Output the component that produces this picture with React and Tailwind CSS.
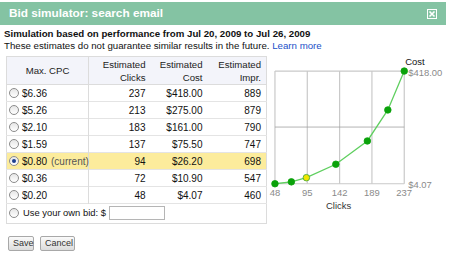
const rows = [
  { cpc: '$6.36', clicks: 237, cost: '$418.00', impr: 889 },
  { cpc: '$5.26', clicks: 213, cost: '$275.00', impr: 879 },
  { cpc: '$2.10', clicks: 183, cost: '$161.00', impr: 790 },
  { cpc: '$1.59', clicks: 137, cost: '$75.50', impr: 747 },
  { cpc: '$0.80', clicks: 94, cost: '$26.20', impr: 698, current: true },
  { cpc: '$0.36', clicks: 72, cost: '$10.90', impr: 547 },
  { cpc: '$0.20', clicks: 48, cost: '$4.07', impr: 460 },
];

// chart points in page coordinates (chart svg starts at x=266, y=56)
const points = [
  [274, 184],
  [290.5, 182.1],
  [305.6, 177.9, true],
  [335.2, 164.4],
  [366.9, 141],
  [387.5, 109.8],
  [404, 70.7],
];

function Radio({ checked }) {
  return (
    <span className="inline-flex items-center justify-center w-[10px] h-[10px] rounded-full border border-[#8c8c8c] bg-gradient-to-b from-[#e6e6e6] to-white mr-[2px] shrink-0">
      {checked && <span className="w-[4px] h-[4px] rounded-full bg-[#1c3f8f]" />}
    </span>
  );
}

function Chart() {
  const gx = [274, 306.5, 339, 371.5, 404];
  const labels = ['48', '95', '142', '189', '237'];
  const font = 'Liberation Sans, Arial, sans-serif';
  return (
    <svg width="184" height="160" viewBox="266 56 184 160" className="block">
      {gx.map((x) => (
        <line key={x} x1={x} y1={70.7} x2={x} y2={184} stroke="#c9c9c9" strokeWidth="1.2" />
      ))}
      <line x1={274} y1={70.7} x2={404} y2={70.7} stroke="#c9c9c9" strokeWidth="1.2" />
      <line x1={274} y1={127} x2={404} y2={127} stroke="#a0a0a0" strokeWidth="0.8" />
      <line x1={274} y1={184} x2={404} y2={184} stroke="#c9c9c9" strokeWidth="1.2" />
      <polyline
        points={points.map((p) => `${p[0]},${p[1]}`).join(' ')}
        fill="none"
        stroke="#5fcf5f"
        strokeWidth="1.3"
      />
      {points.map((p, i) => (
        <circle
          key={i}
          cx={p[0]}
          cy={p[1]}
          r="3.3"
          fill={p[2] ? '#f2e600' : '#0aa20a'}
          stroke={p[2] ? '#3aa53a' : '#0aa20a'}
          strokeWidth="0.8"
        />
      ))}
      <text x="405" y="64.5" fontSize="9.5" fill="#111" fontFamily={font}>Cost</text>
      <text x="408" y="75.5" fontSize="9.5" fill="#8a8a8a" fontFamily={font}>$418.00</text>
      <text x="408" y="188" fontSize="9.5" fill="#8a8a8a" fontFamily={font}>$4.07</text>
      {gx.map((x, i) => (
        <text key={x} x={x} y="196" fontSize="9.5" fill="#8a8a8a" textAnchor="middle" fontFamily={font}>
          {labels[i]}
        </text>
      ))}
      <text x="338" y="209" fontSize="9.5" fill="#333" textAnchor="middle" fontFamily={font}>Clicks</text>
    </svg>
  );
}

export default function App() {
  return (
    <div className="w-[450px] h-[257px] bg-white overflow-hidden text-[#111]" style={{ fontFamily: '"Liberation Sans", Arial, sans-serif' }}>
      <div className="mt-[2px] w-[446px] h-[23px] bg-[#84c3a3] flex items-center justify-between pl-[9px] pr-[9px]">
        <span className="text-white font-bold text-[11.8px] leading-none">Bid simulator: search email</span>
        <svg width="10" height="10" viewBox="0 0 10 10">
          <rect x="0.5" y="0.5" width="9" height="9" fill="none" stroke="#fff" strokeWidth="1" />
          <path d="M2.5 2.5 L7.5 7.5 M7.5 2.5 L2.5 7.5" stroke="#fff" strokeWidth="1.6" />
        </svg>
      </div>
      <div className="pl-[4px] pt-[3px]">
        <div className="font-bold text-[9.7px] leading-[12px]">Simulation based on performance from Jul 20, 2009 to Jul 26, 2009</div>
        <div className="text-[9.7px] leading-[12px]">
          These estimates do not guarantee similar results in the future.{' '}
          <span className="text-[#2250c8]">Learn more</span>
        </div>
      </div>
      <div className="flex mt-[4px]">
        <table className="ml-[6px] w-[260px] border-collapse border border-[#dcdcdc] text-[10px] table-fixed">
          <colgroup>
            <col className="w-[82px]" />
            <col className="w-[60px]" />
            <col className="w-[57px]" />
            <col className="w-[61px]" />
          </colgroup>
          <thead>
            <tr className="h-[28px] bg-[#f3f4fa] text-[9.6px] leading-[13px] text-[#222] border-b border-[#dcdcdc]">
              <th className="font-normal text-center border-r border-[#dcdcdc]">Max. CPC</th>
              <th className="font-normal text-right pr-[3px]">Estimated<br />Clicks</th>
              <th className="font-normal text-right pr-[3px]">Estimated<br />Cost</th>
              <th className="font-normal text-right pr-[5px]">Estimated<br />Impr.</th>
            </tr>
          </thead>
          <tbody>
            {rows.map((r) => (
              <tr key={r.cpc} className={`h-[17px] border-b border-[#e4e4e4] ${r.current ? 'bg-[#fcec9c]' : ''}`}>
                <td className="border-r border-[#dcdcdc] pl-[2px] p-0">
                  <div className="flex items-center gap-[1px]">
                    <Radio checked={r.current} />
                    <span>{r.cpc}</span>
                    {r.current && <span className="text-[#555] ml-[3px]">(current)</span>}
                  </div>
                </td>
                <td className="text-right pr-[3px] p-0">{r.clicks}</td>
                <td className="text-right pr-[3px] p-0">{r.cost}</td>
                <td className="text-right pr-[5px] p-0">{r.impr}</td>
              </tr>
            ))}
            <tr className="h-[20px]">
              <td colSpan={4} className="pl-[2px] p-0">
                <div className="flex items-center gap-[1px] text-[9.4px]">
                  <Radio />
                  <span className="ml-[1px]">Use your own bid: $</span>
                  <span className="ml-[2px] w-[56px] h-[14px] border border-[#b5b5b5] bg-white" />
                </div>
              </td>
            </tr>
          </tbody>
        </table>
        <Chart />
      </div>
      <div className="flex gap-[6px] ml-[8px] mt-[12px]">
        <button className="h-[15px] px-[4px] w-[26px] text-[9px] leading-none text-[#333] border border-[#a8a8a8] rounded-[2px] bg-gradient-to-b from-[#fafafa] to-[#dcdcdc]">Save</button>
        <button className="h-[15px] px-[4px] w-[35px] text-[9px] leading-none text-[#333] border border-[#a8a8a8] rounded-[2px] bg-gradient-to-b from-[#fafafa] to-[#dcdcdc]">Cancel</button>
      </div>
    </div>
  );
}
